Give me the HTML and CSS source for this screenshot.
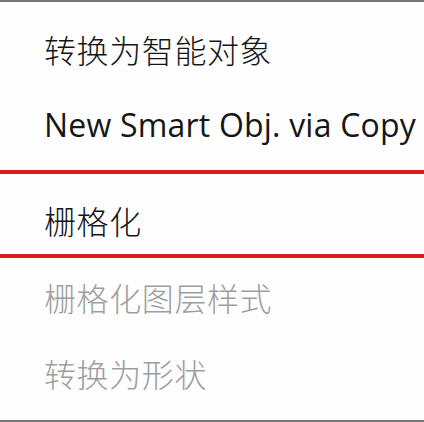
FILE: index.html
```html
<!DOCTYPE html>
<html lang="zh-CN">
<head>
<meta charset="utf-8">
<title>Menu</title>
<link rel="stylesheet" href="styles.css">
</head>
<body>
<div class="menu">
  <div class="item">转换为智能对象</div>
  <div class="item latin">New Smart Obj. via Copy</div>
  <div class="item highlight">栅格化</div>
  <div class="item disabled">栅格化图层样式</div>
  <div class="item disabled">转换为形状</div>
</div>
</body>
</html>
```
FILE: styles.css
```css
html, body {
  margin: 0;
  padding: 0;
  background: #fefefe;
}
.menu {
  width: 424px;
  height: 422px;
  box-sizing: border-box;
  border-top: 2px solid #767676;
  border-bottom: 2px solid #767676;
  padding-top: 9px;
  display: flex;
  flex-direction: column;
  overflow: hidden;
}
.item {
  height: 76px;
  line-height: 76px;
  padding-left: 44px;
  font-family: "Noto Sans CJK SC", "Noto Sans", sans-serif;
  font-size: 32px;
  letter-spacing: 0.6px;
  font-weight: 300;
  color: #161616;
  white-space: nowrap;
  flex: none;
}
.latin {
  font-family: "Open Sans", "Noto Sans", sans-serif;
  font-size: 32px;
  font-weight: 400;
  letter-spacing: 0.2px;
}
.highlight {
  margin-top: 7px;
  box-sizing: content-box;
  height: 67px;
  line-height: 67px;
  padding-top: 13px;
  border-top: 4px solid #d91c1c;
  border-bottom: 4px solid #d91c1c;
  margin-bottom: 1px;
}
.disabled {
  color: #9e9e9e;
}
```
